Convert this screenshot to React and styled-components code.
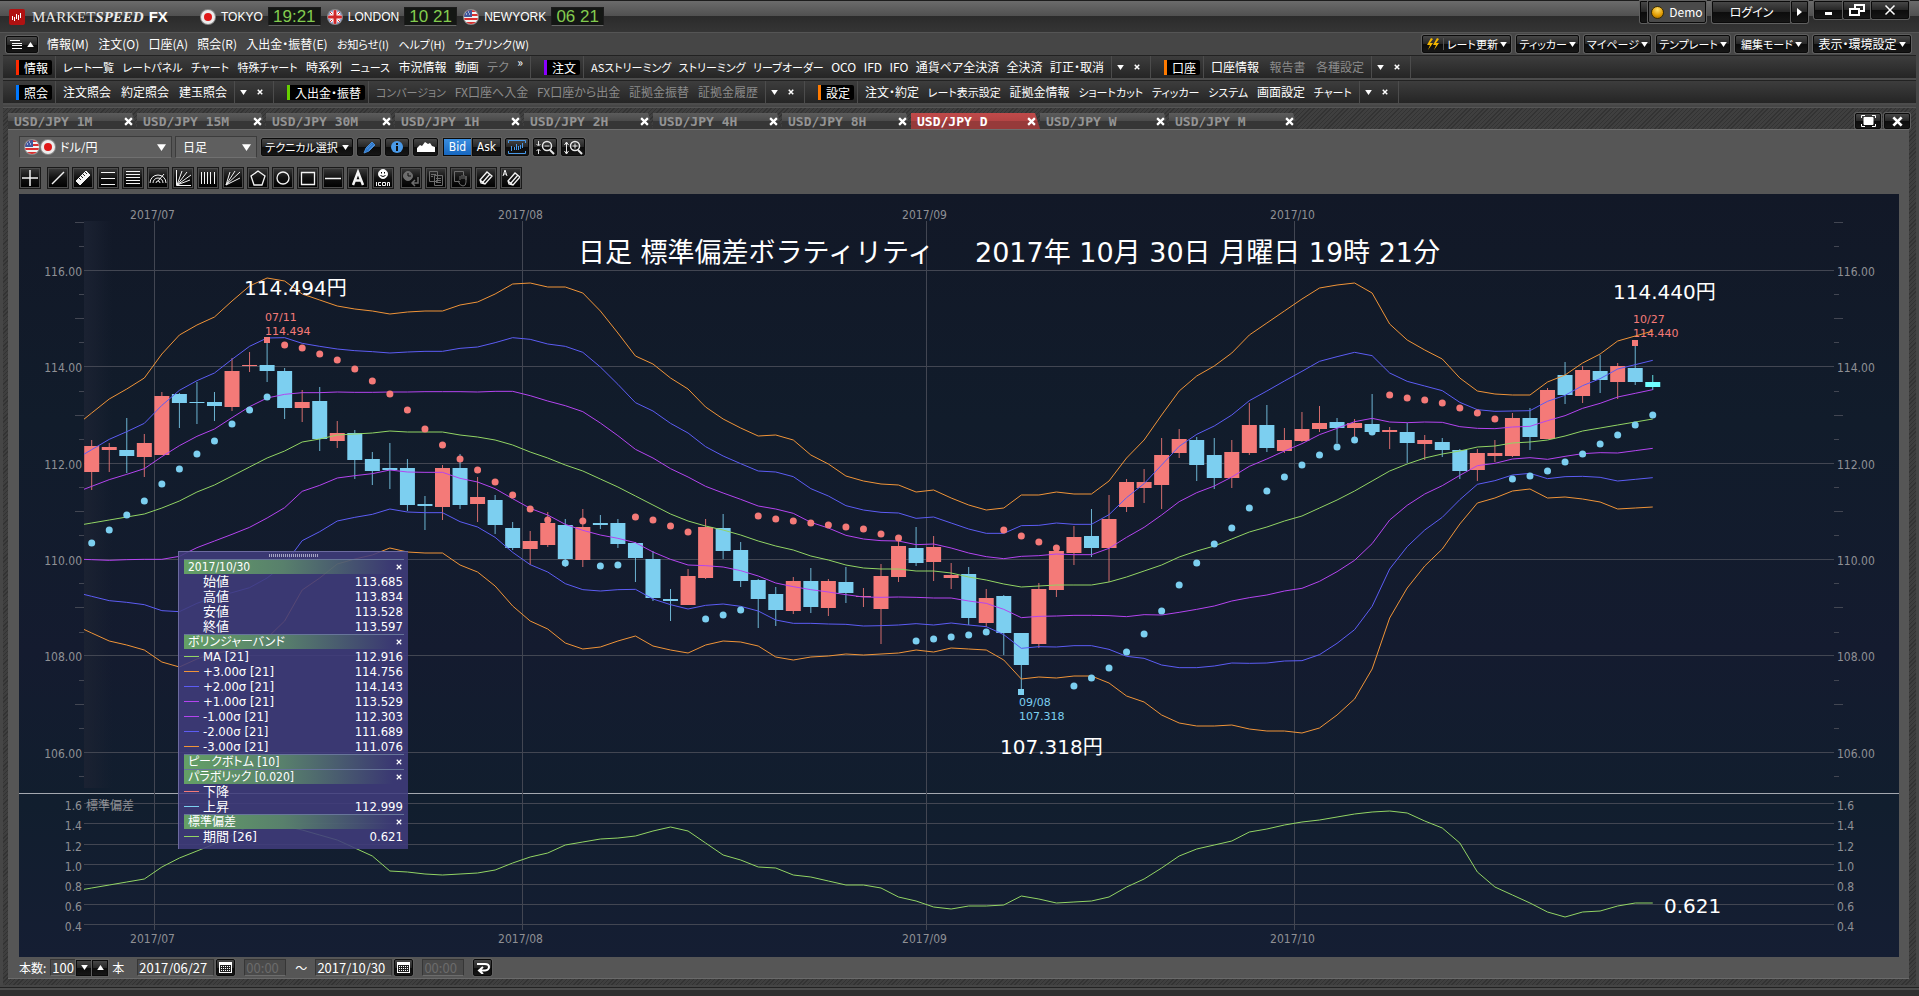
import React from 'react';
import styled, { createGlobalStyle, css } from 'styled-components';

const GlobalStyle = createGlobalStyle`
  * {
    box-sizing: border-box;
  }

  body {
    margin: 0;
    background: #2b2b2b;
    color: #fff;
    font-family: 'Noto Sans CJK JP', 'Liberation Sans', sans-serif;
    font-size: 12px;
    line-height: 1;
    font-feature-settings: 'palt';
  }

  button, select, input {
    margin: 0;
    padding: 0;
    border: 0;
    background: none;
    color: inherit;
    font: inherit;
    font-feature-settings: inherit;
  }

  svg {
    display: block;
    flex: none;
  }
`;

const hatch = css`
  background: repeating-linear-gradient(135deg, #333 0 1px, #3f3f3f 1px 3px);
`;

const darkButton = css`
  display: flex;
  align-items: center;
  justify-content: center;
  white-space: nowrap;
  color: #fff;
  background: linear-gradient(#474747, #262626 50%, #0c0c0c 51%, #161616);
  border: 1px solid #0a0a0a;
  border-radius: 2px;
  box-shadow: 0 0 0 1px #5f5f5f;
`;

const Window = styled.div`
  display: flex;
  flex-direction: column;
  min-height: 100vh;
  padding: 0 3px;
  background: #464646;
  border-top: 1px solid #1c1c1c;
`;

/* ---------- title bar ---------- */

const TitleBar = styled.header`
  display: flex;
  align-items: center;
  height: 32px;
  margin: 0 -3px;
  padding-left: 9px;
  background: linear-gradient(#6b6b6b, #505050 15px, #2b2b2b 15px, #353535);
  border-bottom: 1px solid #555;
`;

const Brand = styled.h1`
  margin: 0 0 0 7px;
  width: 168px;
  font: 15px 'Liberation Serif', serif;
  color: #ececec;
  white-space: nowrap;

  em {
    font-weight: bold;
  }

  strong {
    margin-left: 5px;
    font-family: 'Liberation Sans', sans-serif;
    color: #fff;
  }
`;

const City = styled.div`
  display: flex;
  align-items: center;
  gap: 5px;
  margin-right: 6px;
  font: 12px 'Liberation Sans', sans-serif;
`;

const Clock = styled.time`
  width: 53px;
  height: 19px;
  background: #141714;
  border: 1px solid #1c1c1c;
  border-bottom-color: #666;
  color: #83cc4f;
  font: 17px/17px 'Liberation Sans', sans-serif;
  text-align: center;
`;

const TitleActions = styled.div`
  display: flex;
  align-self: flex-start;
  margin-left: auto;
  padding-right: 10px;
`;

const TitleButton = styled.button`
  ${darkButton}
  width: ${({ $w }) => $w}px;
  height: ${({ $h }) => $h || 22}px;
  margin-left: ${({ $gap }) => $gap || 0}px;
  gap: 5px;
  background: ${({ $flat }) => ($flat ? '#4a4a4a' : undefined)};
  border-radius: 0 0 2px 2px;
`;

const Lamp = styled.i`
  width: 13px;
  height: 13px;
  border-radius: 50%;
  border: 1px solid #3b2c00;
  background: radial-gradient(circle at 50% 25%, #ffdf6a, #e09a00 60%, #8a5b00);
`;

/* ---------- menu row ---------- */

const MenuRow = styled.div`
  display: flex;
  align-items: center;
  height: 22px;
  padding: 0 5px 0 3px;
`;

const ListButton = styled.button`
  ${darkButton}
  width: 32px;
  height: 17px;
  gap: 4px;
`;

const MenuNav = styled.nav`
  display: flex;
  justify-content: space-between;
  width: 482px;
  margin-left: 9px;
`;

const MenuItem = styled.button`
  flex: none;
  font-size: ${({ $tight }) => ($tight ? 11 : 12)}px;
  white-space: nowrap;
`;

const MenuActions = styled.div`
  display: flex;
  gap: 5px;
  margin-left: auto;
`;

const DropButton = styled.button`
  ${darkButton}
  min-width: ${({ $w }) => $w}px;
  height: 18px;
  padding: 0 2px;
  gap: 2px;
  font-size: ${({ $tight }) => ($tight ? 11 : 12)}px;
`;

const Bolt = styled.span`
  margin-right: 1px;
  padding-right: 3px;
  border-right: 1px solid #555;
`;

/* ---------- toolbars ---------- */

const ToolbarRow = styled.div`
  display: flex;
  height: 25px;
  background: linear-gradient(#3d3d3d, #252525);
  border-top: 1px solid #222;
  border-bottom: 2px solid #4c4c4c;
`;

const Group = styled.section`
  display: flex;
  align-items: center;
  flex: 0 0 ${({ $w }) => $w}px;
  border-right: 1px solid #4c4c4c;
  padding-left: 4px;
`;

const Grip = styled.i`
  width: 6px;
  height: 16px;
  margin-right: 3px;
  background: radial-gradient(circle, #808080 30%, transparent 40%) 0 0 / 2px 2px;
`;

const GroupTitle = styled.h2`
  margin: 0 3px 0 0;
  padding: 2px 4px 0 5px;
  height: 15px;
  font-size: 12px;
  font-weight: normal;
  line-height: 11px;
  white-space: nowrap;
  background: #000;
  border-left: 3px solid ${({ $color }) => $color};
  border-radius: 0 2px 2px 0;
`;

const GroupItems = styled.div`
  display: flex;
  flex: 1;
  justify-content: space-between;
  align-items: center;
  height: 22px;
  padding: 0 7px;
  border: solid #4c4c4c;
  border-width: 0 ${({ $closable }) => ($closable ? 1 : 0)}px 0 1px;
`;

const ToolLink = styled.button`
  flex: none;
  font-size: ${({ $tight }) => ($tight ? 11 : 12)}px;
  white-space: nowrap;
  color: ${({ disabled }) => (disabled ? '#8b8b8b' : '#fff')};
`;

const MoreLink = styled(ToolLink)`
  align-self: flex-start;
`;

const GroupEnd = styled.div`
  display: flex;
  align-items: center;
  gap: 10px;
  padding: 0 10px 0 5px;
`;

/* ---------- workspace ---------- */

const Workspace = styled.main`
  ${hatch}
  display: flex;
  flex-direction: column;
  flex: 1;
  margin-top: 2px;
  padding: 0 6px 6px 5px;
  border-top: 1px solid #555;
`;

const TabStrip = styled.div`
  display: flex;
  align-items: flex-end;
  height: 21px;
`;

const Tab = styled.div`
  display: flex;
  align-items: center;
  justify-content: space-between;
  flex: 0 0 129px;
  height: 16px;
  padding: 0 4px 0 6px;
  font: bold 13px 'DejaVu Sans Mono', monospace;
  color: ${({ $active }) => ($active ? '#fff' : '#949494')};
  background: ${({ $active }) =>
    $active
      ? 'linear-gradient(#c04a4a, #b34444 50%, #963a3a 51%)'
      : 'linear-gradient(#5c5c5c, #4a4a4a 50%, #363636 51%)'};
  clip-path: polygon(0 0, 124px 0, 129px 100%, 0 100%);

  button:first-child {
    white-space: nowrap;
  }
`;

const StripButton = styled.button`
  ${darkButton}
  width: 26px;
  height: 16px;
  margin-left: ${({ $first }) => ($first ? 'auto' : '3px')};
`;

const Panel = styled.section`
  display: flex;
  flex-direction: column;
  flex: 1;
  padding: 6px 10px 0 11px;
  margin-right: 1px;
  background: #565656;
  border-top: 1px solid #6e6e6e;
  border-bottom: 1px solid #6a6a6a;
`;

const ControlRow = styled.div`
  display: flex;
  align-items: center;
  height: 22px;
  gap: 3px;
`;

const SelectBox = styled.label`
  display: flex;
  align-items: center;
  width: ${({ $w }) => $w}px;
  height: 22px;
  padding: 0 5px 0 ${({ $indent }) => $indent}px;
  background: #5f5f5f;
  border: 1px solid #3c3c3c;
  border-bottom-color: #707070;

  select {
    flex: 1;
    min-width: 0;
    appearance: none;
    margin-left: 4px;
  }
`;

const ControlButton = styled.button`
  ${darkButton}
  width: ${({ $w }) => $w || 24}px;
  height: 18px;
  gap: 4px;
  margin-left: 1px;
  font-size: ${({ $tight }) => ($tight ? 11 : 12)}px;
`;

const BidAsk = styled.div`
  display: flex;
  margin: 0 0 0 2px;
`;

const SideButton = styled.button`
  ${darkButton}
  width: 29px;
  height: 18px;
  border-radius: 0;
  font: 12px 'DejaVu Sans Condensed', 'Noto Sans', sans-serif;
  ${({ $on }) => $on && css`background: linear-gradient(#3a8ee0, #1767c0);`}
`;

const DrawRow = styled(ControlRow)`
  margin: 9px 0 5px;
`;

const DrawButton = styled.button`
  display: grid;
  place-items: center;
  width: 22px;
  height: 22px;
  margin-right: ${({ $gap }) => ($gap ? 3 : 0)}px;
  color: ${({ disabled }) => (disabled ? '#6d6d6d' : '#f4f4f4')};
  background: linear-gradient(#3c3c3c, #111 50%, #000);
  border: 1px solid #1a1a1a;
  outline: 1px solid #4c4c4c;
  outline-offset: -2px;
`;

const ChartArea = styled.div`
  position: relative;
  flex: 1;
  min-height: 0;
  background: linear-gradient(#121827, #111c2b 30%, #141b2f 60%, #111e2e 80%, #151e33);

  > svg {
    width: 100%;
    height: 100%;
    font-family: 'DejaVu Sans', 'Noto Sans CJK JP', sans-serif;
    font-feature-settings: normal;
  }

  .axis {
    font-family: 'DejaVu Sans Condensed', 'Noto Sans', 'Noto Sans CJK JP', sans-serif;
    font-size: 12px;
    fill: #8f9095;
  }

  .peak {
    font-size: 11px;
  }

  .note {
    font-size: 20px;
    fill: #fff;
  }

  .title {
    font-size: 27px;
    fill: #fff;
  }
`;

/* ---------- floating legend ---------- */

const Legend = styled.aside`
  position: absolute;
  left: 159px;
  top: 357px;
  width: 230px;
  padding: 0 4px 5px 5px;
  background: rgba(64, 60, 124, 0.88);
  border: solid #6c6aa0;
  border-width: 1px 0 0 1px;
  font-family: 'DejaVu Sans Condensed', 'Noto Sans', 'Noto Sans CJK JP', sans-serif;
`;

const LegendGrip = styled.div`
  width: 50px;
  height: 3px;
  margin: 2px auto;
  background: repeating-linear-gradient(90deg, #a5a4c4 0 1px, transparent 1px 2px);
`;

const LegendHead = styled.h3`
  display: flex;
  justify-content: space-between;
  align-items: center;
  height: 15px;
  margin: 0;
  padding: 0 2px 0 4px;
  font-size: 12px;
  font-weight: normal;
  line-height: 14px;
  background: linear-gradient(90deg, #64a066, #58806c 45%, transparent 95%);
  border-top: 1px solid #67759a;
`;

const LegendRow = styled.div`
  display: grid;
  grid-template-columns: 15px 1fr auto;
  align-items: center;
  column-gap: 4px;
  height: 15px;
  padding-right: 1px;
  font-size: 13px;
  line-height: 15px;

  i {
    height: 1px;
    background: ${({ $color }) => $color || 'transparent'};
  }
`;

/* ---------- footer ---------- */

const Footer = styled.footer`
  display: flex;
  align-items: center;
  height: 21px;

  > label {
    margin-right: 4px;
  }
`;

const Field = styled.input`
  width: ${({ $w }) => $w}px;
  height: 17px;
  padding: 0 1px;
  background: #4a4a4a;
  border: 1px solid #363636;
  border-bottom-color: #6c6c6c;
  font-size: 13px;
  font-feature-settings: normal;
  color: ${({ disabled }) => (disabled ? '#6b6b6b' : '#fff')};
`;

const StepButton = styled.button`
  ${darkButton}
  width: 16px;
  height: 16px;
  border-radius: 0;
`;

const FooterButton = styled.button`
  ${darkButton}
  width: ${({ $w }) => $w || 19}px;
  height: ${({ $h }) => $h || 17}px;
  margin: 0 ${({ $after }) => $after || 0}px 0 2px;
`;

const Unit = styled.span`
  margin: 0 13px 0 4px;
`;

const Tilde = styled.span`
  margin: 0 8px 0 9px;
`;

const StatusBar = styled.div`
  height: 11px;
  margin: 0 -3px;
  background: linear-gradient(#454545 0 2px, #222 2px 3px, #4c4c4c 3px 5px, #303030 5px);
`;

/* ---------- small drawings ---------- */

const Caret = ({ up, size = 7 }) => (
  <svg width={size} height={size - 2} viewBox="0 0 8 6" aria-hidden="true">
    <path d={up ? 'M0 6h8L4 0z' : 'M0 0h8L4 6z'} fill="#fff" />
  </svg>
);

const Cross = ({ size = 7, weight = 2 }) => (
  <svg width={size} height={size} viewBox="0 0 8 8" aria-hidden="true">
    <path d="M1 1l6 6M7 1L1 7" stroke="#fff" strokeWidth={weight} />
  </svg>
);

const Flag = ({ country }) => (
  <svg width="16" height="16" viewBox="0 0 16 16" aria-hidden="true">
    <clipPath id={`round-${country}`}>
      <circle cx="8" cy="8" r="7" />
    </clipPath>
    <circle cx="8" cy="8" r="8" fill="#8a8a8a" />
    <g clipPath={`url(#round-${country})`}>
      {country === 'jp' && (
        <>
          <path d="M0 0h16v16H0z" fill="#ececec" />
          <circle cx="8" cy="8" r="4" fill="#e01818" />
        </>
      )}
      {country === 'uk' && (
        <>
          <path d="M0 0h16v16H0z" fill="#2c4a9c" />
          <path d="M1 1l14 14M15 1L1 15" stroke="#fff" strokeWidth="3" />
          <path d="M1 1l14 14M15 1L1 15" stroke="#d02828" />
          <path d="M8 0v16M0 8h16" stroke="#fff" strokeWidth="5" />
          <path d="M8 0v16M0 8h16" stroke="#d02828" strokeWidth="3" />
        </>
      )}
      {country === 'us' && (
        <>
          <path d="M0 0h16v16H0z" fill="#f2f2f2" />
          <path d="M0 2h16M0 6h16M0 10h16M0 14h16" stroke="#d83030" strokeWidth="2" />
          <path d="M0 0h9v8H0z" fill="#41589c" />
          <path d="M2 3h1M5 3h1M3 5h1M6 5h1" stroke="#fff" />
        </>
      )}
    </g>
  </svg>
);

const Logo = () => (
  <svg width="16" height="16" viewBox="0 0 16 16" aria-hidden="true">
    <rect width="16" height="16" rx="2" fill="#b01212" />
    <path d="M3.500 7v4M5.500 8v4M7.500 5v5M9.500 6v5M11.500 4v5" stroke="#fff" />
  </svg>
);

const Icon = ({ children, fill = 'none', size = 18 }) => (
  <svg width={size} height={size} viewBox="0 0 18 18" fill={fill} stroke="currentColor" aria-hidden="true">
    {children}
  </svg>
);

const eraser = <path d="M3 11L10 3l5 4-7 8-4-1zM3 11l5 4M6 13l7-8" strokeWidth="1.3" />;

const DRAW_TOOLS = [
  ['十字カーソル', <path d="M9 1v16M1 9h16" strokeWidth="1.5" />],
  ['直線', <path d="M3 15L15 3" strokeWidth="1.5" />],
  ['定規', <><path d="M2 12L12 2l4 4L6 16z" fill="currentColor" /><path d="M5 9l2 2M7 7l2 2M9 5l2 2M11 3l2 2" stroke="#222" /></>],
  ['三本線', <path d="M2 3.5h14M2 9.5h14M2 15.5h14" />],
  ['五本線', <path d="M2 2.5h14M2 5.5h14M2 8.5h14M2 11.5h14M2 14.5h14" />],
  ['円弧', <path d="M1 14a8 8 0 0 1 16 0M4 14a5 5 0 0 1 10 0M7 14a2 2 0 0 1 4 0M9 12l6-7" />],
  ['ファン', <path d="M2.500 1v15.500H17M3 16L8 2M3 16L13 3M3 16L17 6M3 16l13-5" />],
  ['タイムゾーン', <path d="M2.500 3v12M5.500 3v12M8.500 3v12M11.500 3v12M15.500 3v12" />],
  ['放射線', <path d="M2 16L6 3M2 16L11 2M2 16L16 3M2 16l14-7" />],
  ['五角形', <path d="M9 2l7 5-3 9H5L2 7z" strokeWidth="1.3" />],
  ['円', <circle cx="9" cy="9" r="6" strokeWidth="1.3" />],
  ['四角形', <path d="M2.500 3.500h13v12h-13z" strokeWidth="1.3" />],
  ['水平線', <path d="M1 9.500h16" strokeWidth="1.500" />],
  ['テキスト', <path d="M4 16L9 3l5 13M6 11.500h6" strokeWidth="2.500" />],
  [
    'アイコン',
    <>
      <circle cx="9" cy="5" r="4.500" fill="#fff" />
      <path d="M7.500 3v1.500M10.500 3v1.500M6.500 6.500q2.500 2 5 0" stroke="#000" />
      <path d="M2.500 13v4M7 13.500H4.500v3H7M8.500 13.500h3v3h-3zM13.500 17v-3.500h2V17" />
    </>,
  ],
  ['履歴', <><circle cx="6" cy="7" r="4.500" fill="currentColor" /><path d="M6 4v3h3" stroke="#111" /><path d="M16 8v6h-5M13 11l-3 3 3 3" strokeWidth="1.500" /></>],
  ['コピー', <path d="M2.500 2.500h8v10h-8zM7.500 6.500h8v10h-8zM9 9.500h5M9 11.500h5M9 13.500h5M4 5.500h5M4 7.500h2" />],
  ['移動', <path d="M2.500 2.500h9v4M2.500 2.500v10h4M8 11V7M10 10V6M12 10V6M14 11V7v6q0 4-3 4t-5-5l2 1" />],
  ['消しゴム', eraser],
  ['全消去', <><g transform="translate(3 1)">{eraser}</g><path d="M1 7l2-6 2 6M2 5h2" /></>],
];

/* ---------- chart data: canvas heights by trading day ---------- */

const STEP = 17.54;
const xAt = i => 91.7 + STEP * i;

// high, body top, body bottom, low, rising
const CANDLES = [
  [440, 446, 472, 490, 1], [443, 447, 450, 472, 1], [418, 450, 456, 473, 0], [434, 443, 457, 477, 1],
  [392, 396, 455, 455, 1], [393, 394, 403, 428, 0], [382, 402, 403, 424, 0], [392, 402, 406, 421, 0],
  [358, 371, 407, 411, 1], [352, 365, 366, 372, 1], [340, 365, 371, 382, 0], [368, 371, 408, 419, 0],
  [390, 402, 408, 422, 1], [387, 401, 439, 451, 0], [421, 433, 441, 448, 1], [430, 433, 460, 479, 0],
  [452, 459, 471, 485, 0], [443, 468, 470, 489, 0], [459, 468, 505, 511, 0], [496, 504, 506, 530, 0],
  [465, 468, 507, 520, 1], [454, 468, 505, 509, 0], [477, 497, 504, 522, 1], [495, 500, 525, 534, 0],
  [522, 528, 548, 550, 0], [531, 541, 549, 565, 1], [512, 523, 545, 547, 1], [519, 525, 559, 567, 0],
  [509, 527, 560, 567, 1], [515, 523, 525, 529, 0], [519, 523, 544, 548, 0], [542, 543, 558, 582, 0],
  [551, 559, 598, 601, 0], [589, 599, 601, 621, 0], [569, 576, 605, 605, 1], [519, 527, 578, 579, 1],
  [514, 528, 551, 559, 0], [542, 550, 581, 587, 0], [579, 580, 599, 628, 0], [587, 594, 610, 626, 0],
  [577, 581, 611, 614, 1], [568, 581, 607, 613, 0], [579, 581, 608, 616, 1], [567, 582, 593, 603, 0],
  [588, 596, 597, 607, 1], [564, 576, 609, 644, 1], [541, 546, 577, 582, 1], [527, 548, 563, 566, 0],
  [536, 547, 562, 581, 1], [563, 575, 578, 589, 1], [567, 574, 618, 625, 0], [589, 598, 623, 627, 1],
  [595, 596, 633, 655, 0], [633, 633, 665, 690, 0], [583, 589, 644, 648, 1], [547, 551, 590, 597, 1],
  [526, 537, 553, 565, 1], [509, 536, 548, 557, 0], [495, 519, 548, 582, 1], [479, 482, 507, 512, 1],
  [469, 482, 488, 503, 1], [438, 455, 485, 509, 1], [429, 439, 453, 458, 1], [437, 440, 465, 481, 0],
  [438, 455, 478, 489, 0], [440, 452, 478, 488, 1], [403, 425, 453, 455, 1], [405, 425, 448, 452, 0],
  [428, 440, 451, 453, 1], [412, 429, 441, 442, 1], [406, 423, 429, 432, 1], [418, 422, 428, 443, 0],
  [419, 423, 428, 437, 1], [394, 424, 432, 433, 0], [427, 430, 432, 449, 1], [423, 432, 443, 463, 0],
  [435, 440, 444, 460, 1], [438, 442, 450, 457, 0], [449, 450, 471, 479, 0], [449, 453, 470, 481, 1],
  [440, 453, 456, 462, 1], [413, 418, 456, 457, 1], [408, 418, 437, 450, 0], [388, 390, 439, 439, 1],
  [362, 375, 395, 404, 0], [366, 370, 396, 403, 1], [355, 371, 380, 393, 0], [363, 366, 382, 399, 1],
  [346, 368, 382, 385, 0], [375, 382, 387, 390, 2],
];

// Parabolic SAR, split into runs of one trend
const SAR = [
  { start: 0, up: true, ys: [543, 530, 515, 501, 484, 469, 454, 441, 424, 410, 397] },
  { start: 11, ys: [345, 348, 354, 360, 369, 381, 394, 410, 429, 445, 459, 470, 482, 495, 509, 520] },
  { start: 27, up: true, ys: [563] },
  { start: 28, ys: [521] },
  { start: 29, up: true, ys: [566, 565] },
  { start: 31, ys: [517, 520, 526, 532] },
  { start: 35, up: true, ys: [619, 615, 610] },
  { start: 38, ys: [516, 519, 521, 523, 525, 527, 529, 534, 538] },
  { start: 47, up: true, ys: [641, 639, 637, 635, 632] },
  { start: 52, ys: [530, 536, 542, 548] },
  {
    start: 56,
    up: true,
    ys: [686, 678, 668, 652, 634, 611, 585, 563, 544, 528, 508, 491, 477, 465, 455, 447, 440, 432],
  },
  { start: 74, ys: [395, 398, 400, 403, 408, 413, 419] },
  { start: 81, up: true, ys: [479, 476, 471, 462, 454, 444, 435, 425, 415] },
];

const MA = [
  523, 520, 517, 514, 508, 501, 492, 485, 476, 467, 458, 451, 442, 439, 435, 434, 433, 431, 432, 432,
  432, 435, 437, 440, 445, 452, 458, 465, 471, 479, 487, 496, 505, 514, 521, 526, 530, 535, 541, 546,
  550, 556, 560, 565, 568, 569, 569, 571, 571, 573, 577, 580, 584, 587, 586, 585, 585, 585, 582, 577,
  571, 565, 557, 551, 546, 539, 532, 527, 521, 516, 508, 500, 491, 481, 471, 464, 458, 454, 451, 447,
  446, 443, 442, 440, 436, 431, 428, 425, 422, 419,
];

const UPPER = [
  413, 399, 389, 378, 354, 335, 325, 317, 301, 286, 278, 281, 294, 300, 306, 309, 311, 314, 312, 311,
  311, 305, 302, 294, 284, 283, 287, 287, 293, 311, 333, 356, 364, 378, 389, 407, 419, 428, 436, 435,
  440, 455, 464, 476, 481, 484, 485, 492, 490, 498, 505, 510, 508, 495, 495, 492, 494, 494, 481, 458,
  440, 415, 391, 376, 366, 353, 335, 323, 311, 299, 288, 285, 283, 293, 324, 340, 350, 359, 378, 391,
  394, 395, 395, 382, 375, 363, 354, 341, 336, 331,
];

const DEVIATION = [
  888, 885, 882, 879, 867, 858, 851, 844, 835, 826, 821, 826, 830, 835, 840, 848, 856, 871, 872, 874,
  875, 874, 873, 870, 863, 857, 853, 845, 842, 839, 838, 836, 831, 827, 831, 843, 855, 860, 867, 868,
  875, 877, 881, 885, 885, 888, 897, 901, 907, 909, 906, 906, 905, 896, 899, 903, 902, 901, 897, 887,
  879, 868, 856, 849, 845, 841, 832, 829, 825, 822, 820, 817, 814, 812, 811, 813, 821, 828, 843, 872,
  887, 895, 903, 912, 917, 912, 911, 906, 903, 903,
];

const COLORS = {
  up: '#f47a78',
  down: '#7ccff0',
  live: '#6fffff',
  ma: '#92d464',
  s1: '#b444f0',
  s2: '#5c5cf4',
  s3: '#f09438',
};

const BANDS = [
  [3, COLORS.s3],
  [2, COLORS.s2],
  [1, COLORS.s1],
  [0, COLORS.ma],
  [-1, COLORS.s1],
  [-2, COLORS.s2],
  [-3, COLORS.s3],
];

// extends the first segment to the left edge of the plot
const toPoints = ys => {
  const first = ys[0] - (ys[1] - ys[0]) * 0.44;
  return [`84,${first}`, ...ys.map((y, i) => `${xAt(i)},${y}`)].join(' ');
};

const bandPoints = k => toPoints(MA.map((ma, i) => ma - ((ma - UPPER[i]) / 3) * k));

const MONTHS = [
  ['2017/07', 154.5],
  ['2017/08', 522.5],
  ['2017/09', 926.5],
  ['2017/10', 1294.5],
];

const PRICES = [
  [116, 270.5],
  [114, 366.5],
  [112, 463.5],
  [110, 559.5],
  [108, 655.5],
  [106, 752.5],
];

const LEVELS = [
  ['1.6', 803.5],
  ['1.4', 823.5],
  ['1.2', 844.5],
  ['1.0', 864.5],
  ['0.8', 884.5],
  ['0.6', 904.5],
  ['0.4', 924.5],
];

const TICKS = Array.from({ length: 24 }, (_, i) => 117 - i / 2).filter(p => p % 2 !== 0);

const Chart = () => (
  <svg viewBox="19 194 1880 763" role="img" aria-label="USD/JPY 日足チャート">
    <defs>
      <linearGradient id="edge">
        <stop offset="0" stopColor="#1b2232" />
        <stop offset="1" stopColor="#1b2232" stopOpacity="0" />
      </linearGradient>
    </defs>
    <rect x="84" y="221" width="28" height="567" fill="url(#edge)" />

    <g stroke="#424652" shapeRendering="crispEdges">
      {PRICES.map(([price, y]) => (
        <path key={price} d={`M84 ${y}H1834`} />
      ))}
      {LEVELS.map(([level, y]) => (
        <path key={level} d={`M84 ${y}H1834`} />
      ))}
      {TICKS.map(p => {
        const y = Math.round(270 + (116 - p) * 48.2) + 0.5;
        const len = p % 1 === 0 ? 9 : 5;
        return <path key={p} d={`M84 ${y}h${-len}M1834 ${y}h${len}`} />;
      })}
      <path d="M19 793.5H1899" stroke="#a4a8b0" />
      {MONTHS.map(([month, x]) => (
        <path key={month} d={`M${x} 221V930`} />
      ))}
    </g>

    {MONTHS.map(([month, x]) => (
      <g key={month} className="axis" textAnchor="middle">
        <text x={x - 2} y="219">{month}</text>
        <text x={x - 2} y="943">{month}</text>
      </g>
    ))}
    {PRICES.map(([price, y]) => (
      <g key={price} className="axis">
        <text x="82" y={y + 5} textAnchor="end">{price.toFixed(2)}</text>
        <text x="1837" y={y + 5}>{price.toFixed(2)}</text>
      </g>
    ))}
    {LEVELS.map(([level, y]) => (
      <g key={level} className="axis">
        <text x="82" y={y + 6} textAnchor="end">{level}</text>
        <text x="1837" y={y + 6}>{level}</text>
      </g>
    ))}
    <text x="86" y="810" className="axis">標準偏差</text>

    <g className="peak" fill={COLORS.up}>
      <text x="265" y="321">07/11</text>
      <text x="265" y="335">114.494</text>
      <text x="1633" y="323">10/27</text>
      <text x="1633" y="337">114.440</text>
    </g>
    <g className="peak" fill={COLORS.down}>
      <text x="1019" y="706">09/08</text>
      <text x="1019" y="720">107.318</text>
    </g>

    <clipPath id="plot">
      <path d="M84 221h1750v709H84z" />
    </clipPath>
    <g clipPath="url(#plot)">
      {CANDLES.map(([high, top, bottom, low, dir], i) => {
        const color = [COLORS.down, COLORS.up, COLORS.live][dir];
        return (
          <g key={i} fill={color}>
            <path d={`M${xAt(i)} ${high}V${low}`} stroke={color} strokeOpacity="0.85" />
            <rect x={xAt(i) - 7.5} y={top} width="15" height={Math.max(bottom - top, 1)} />
          </g>
        );
      })}
      <g fill="none">
        {BANDS.map(([k, color]) => (
          <polyline key={k} points={bandPoints(k)} stroke={color} />
        ))}
        <polyline points={toPoints(DEVIATION)} stroke={COLORS.ma} />
      </g>
      {SAR.map(({ start, up, ys }) =>
        ys.map((y, i) => (
          <circle key={start + i} cx={xAt(start + i)} cy={y} r="3.5" fill={up ? COLORS.down : COLORS.up} />
        ))
      )}
      <rect x="264" y="337" width="6" height="6" fill={COLORS.up} />
      <rect x="1632" y="340" width="6" height="6" fill={COLORS.up} />
      <rect x="1018" y="689" width="6" height="6" fill={COLORS.down} />
    </g>

    <text x="578" y="262" className="title">日足 標準偏差ボラティリティ</text>
    <text x="975" y="262" className="title">2017年 10月 30日 月曜日 19時 21分</text>
    <text x="244" y="295" className="note">114.494円</text>
    <text x="1613" y="299" className="note">114.440円</text>
    <text x="1000" y="754" className="note">107.318円</text>
    <text x="1664" y="913" className="note">0.621</text>
  </svg>
);

const LEGEND = [
  {
    title: '2017/10/30',
    rows: [['始値', '113.685'], ['高値', '113.834'], ['安値', '113.528'], ['終値', '113.597']],
  },
  {
    title: 'ボリンジャーバンド',
    rows: [
      ['MA [21]', '112.916', COLORS.ma],
      ['+3.00σ [21]', '114.756', COLORS.s3],
      ['+2.00σ [21]', '114.143', COLORS.s2],
      ['+1.00σ [21]', '113.529', COLORS.s1],
      ['-1.00σ [21]', '112.303', COLORS.s1],
      ['-2.00σ [21]', '111.689', COLORS.s2],
      ['-3.00σ [21]', '111.076', COLORS.s3],
    ],
  },
  { title: 'ピークボトム [10]', rows: [] },
  {
    title: 'パラボリック [0.020]',
    rows: [['下降', '', COLORS.up], ['上昇', '112.999', COLORS.down]],
  },
  { title: '標準偏差', rows: [['期間 [26]', '0.621', COLORS.ma]] },
];

const CITIES = [
  ['TOKYO', 'jp', '19:21'],
  ['LONDON', 'uk', '10 21'],
  ['NEWYORK', 'us', '06 21'],
];

const MENU = ['情報(M)', '注文(O)', '口座(A)', '照会(R)', '入出金・振替(E)', 'お知らせ(I)', 'ヘルプ(H)', 'ウェブリンク(W)'];

const ACTIONS = [
  ['レート更新', 89],
  ['ティッカー', 62],
  ['マイページ', 67],
  ['テンプレート', 74],
  ['編集モード', 73],
  ['表示・環境設定', 98],
];

// disabled entries start with "-"
const TOOLBARS = [
  [
    { title: '情報', color: '#ff2a00', w: 528, items: ['レート一覧', 'レートパネル', 'チャート', '特殊チャート', '時系列', 'ニュース', '市況情報', '動画', '-テク'] },
    {
      title: '注文', color: '#8a00ff', w: 620, closable: true,
      items: ['ASストリーミング', 'ストリーミング', 'リーブオーダー', 'OCO', 'IFD', 'IFO', '通貨ペア全決済', '全決済', '訂正・取消'],
    },
    { title: '口座', color: '#ff7a00', w: 260, closable: true, items: ['口座情報', '-報告書', '-各種設定'] },
  ],
  [
    { title: '照会', color: '#0078ff', w: 271, closable: true, items: ['注文照会', '約定照会', '建玉照会'] },
    {
      title: '入出金・振替', color: '#66d000', w: 531, closable: true,
      items: ['-コンバージョン', '-FX口座へ入金', '-FX口座から出金', '-証拠金振替', '-証拠金履歴'],
    },
    {
      title: '設定', color: '#ff7a00', w: 594, closable: true,
      items: ['注文・約定', 'レート表示設定', '証拠金情報', 'ショートカット', 'ティッカー', 'システム', '画面設定', 'チャート'],
    },
  ],
];

const TABS = ['1M', '15M', '30M', '1H', '2H', '4H', '8H', 'D', 'W', 'M'];

const isKanaHeavy = text => (text.match(/[ぁ-んァ-ヶー]/g) || []).length > 2;

const ToolGroup = ({ title, color, w, items, closable }) => (
  <Group $w={w} aria-label={title}>
    <Grip />
    <GroupTitle $color={color}>{title}</GroupTitle>
    <GroupItems $closable={closable}>
      {items.map(item => {
        const label = item.replace('-', '');
        return (
          <ToolLink key={item} disabled={item !== label} $tight={isKanaHeavy(label)}>
            {label}
          </ToolLink>
        );
      })}
      {!closable && <MoreLink aria-label="さらに表示">»</MoreLink>}
    </GroupItems>
    {closable && (
      <GroupEnd>
        <button aria-label={`${title}メニュー`}><Caret /></button>
        <button aria-label={`${title}を閉じる`}><Cross size={6} /></button>
      </GroupEnd>
    )}
  </Group>
);

const CalendarIcon = () => (
  <svg width="13" height="11" viewBox="0 0 13 11" shapeRendering="crispEdges" aria-hidden="true">
    <path d="M0 0h13v11H0z" fill="#fff" />
    <path d="M1 3h11v7H1z" fill="#222" />
    <path d="M2 4.500h9M2 6.500h9M2 8.500h9" stroke="#fff" strokeDasharray="1 1" />
  </svg>
);

const App = () => (
  <>
    <GlobalStyle />
    <Window>
      <TitleBar>
        <Logo />
        <Brand>
          MARKET<em>SPEED</em><strong>FX</strong>
        </Brand>
        {CITIES.map(([name, country, time]) => (
          <City key={name}>
            <Flag country={country} />
            {name}
            <Clock>{time}</Clock>
          </City>
        ))}
        <TitleActions>
          <TitleButton $w={8} aria-label="折りたたむ" />
          <TitleButton $w={58} $flat><Lamp />Demo</TitleButton>
          <TitleButton $w={79} $gap={6}>ログイン</TitleButton>
          <TitleButton $w={17} aria-label="ログインメニュー">
            <svg width="5" height="8" viewBox="0 0 5 8"><path d="M0 0v8l5-4z" fill="#fff" /></svg>
          </TitleButton>
          <TitleButton $w={29} $h={18} $gap={6} aria-label="最小化">
            <svg width="8" height="10"><path d="M0 8.500h7" stroke="#fff" strokeWidth="3" /></svg>
          </TitleButton>
          <TitleButton $w={28} $h={18} aria-label="元に戻す">
            <svg width="16" height="12" fill="none" stroke="#fff" strokeWidth="2">
              <path d="M6 4V1h9v6h-4M1 5h9v6H1z" />
            </svg>
          </TitleButton>
          <TitleButton $w={38} $h={18} aria-label="閉じる"><Cross size={12} weight={1} /></TitleButton>
        </TitleActions>
      </TitleBar>

      <MenuRow>
        <ListButton aria-label="メニュー一覧">
          <svg width="13" height="10"><path d="M0 1.500h10M2 4.500h10M2 6.500h10M2 9.500h10" stroke="#fff" /></svg>
          <Caret up />
        </ListButton>
        <MenuNav>
          {MENU.map(item => (
            <MenuItem key={item} $tight={isKanaHeavy(item)}>{item}</MenuItem>
          ))}
        </MenuNav>
        <MenuActions>
          {ACTIONS.map(([label, w], i) => (
            <DropButton key={label} $w={w} $tight={isKanaHeavy(label)}>
              {i === 0 && (
                <Bolt>
                  <svg width="13" height="12"><path d="M4 0L0 7h3l-2 5 5-7H3l3-4zM10 0L6 7h3l-2 5 5-7H9l3-4z" fill="#f5b800" /></svg>
                </Bolt>
              )}
              {label}
              <Caret />
            </DropButton>
          ))}
        </MenuActions>
      </MenuRow>

      {TOOLBARS.map((groups, i) => (
        <ToolbarRow key={i}>
          {groups.map(group => (
            <ToolGroup key={group.title} {...group} />
          ))}
        </ToolbarRow>
      ))}

      <Workspace>
        <TabStrip>
          {TABS.map(name => (
            <Tab key={name} $active={name === 'D'}>
              <button>USD/JPY {name}</button>
              <button aria-label={`${name}を閉じる`}><Cross size={9} /></button>
            </Tab>
          ))}
          <StripButton $first aria-label="最大化">
            <svg width="15" height="12" fill="none" stroke="#fff">
              <path d="M.5 3V.5H4M11 .5h3.500V3M14.500 9v2.500H11M4 11.500H.5V9" />
              <path d="M3 2.500h9v7H3z" fill="#fff" />
            </svg>
          </StripButton>
          <StripButton aria-label="チャートを閉じる"><Cross size={11} /></StripButton>
        </TabStrip>

        <Panel>
          <ControlRow>
            <SelectBox $w={153} $indent={4}>
              <Flag country="us" />
              <Flag country="jp" />
              <select aria-label="通貨ペア"><option>ドル/円</option></select>
              <Caret size={9} />
            </SelectBox>
            <SelectBox $w={82} $indent={3}>
              <select aria-label="足種"><option>日足</option></select>
              <Caret size={9} />
            </SelectBox>
            <ControlButton $w={92} $tight>テクニカル選択<Caret /></ControlButton>
            <ControlButton $w={24} aria-label="描画">
              <svg width="13" height="13"><path d="M1 12l2-5 6-6 3 3-6 6zM4 8l5-5M6 9l5-5" fill="#2d78cc" stroke="#4a8ed8" /></svg>
            </ControlButton>
            <ControlButton $w={24} aria-label="情報">
              <svg width="12" height="12">
                <circle cx="6" cy="6" r="6" fill="#4a9ae8" />
                <path d="M6 2v2M6 5v5" stroke="#111" strokeWidth="2" />
              </svg>
            </ControlButton>
            <ControlButton $w={25} aria-label="エリア">
              <svg width="18" height="10"><path d="M0 10V6l3-3 2 1 3-4 3 2 2-1 2 3 3 1v5z" fill="#fff" /></svg>
            </ControlButton>
            <BidAsk>
              <SideButton $on>Bid</SideButton>
              <SideButton>Ask</SideButton>
            </BidAsk>
            <ControlButton $w={24} aria-label="チャート種類">
              <svg width="18" height="14" fill="none" stroke="#4a9ae8">
                <path d="M.5 3V.5h17V3M.5 11v2.500h17V11M3.500 6v5M6.500 7v3M8.500 4v6M10.500 6v4M12.500 5v4M14.500 3v5" />
              </svg>
            </ControlButton>
            {['縮小', '拡大'].map((label, i) => (
              <ControlButton key={label} $w={24} aria-label={label}>
                <svg width="20" height="15" fill="none" stroke="#e8e8e8">
                  <path d={i ? 'M3.500 2v12M1.500 5l2-3 2 3M1.500 11l2 3 2-3' : 'M3.500 1v4M3.500 10v4M1.500 4l2 2 2-2M1.500 11l2-2 2 2'} />
                  <circle cx="12" cy="6" r="4.500" strokeWidth="1.500" />
                  <path d={i ? 'M9.500 6h5M12 3.500v5' : 'M9.500 6h5'} />
                  <path d="M15 10l4 4" strokeWidth="2" />
                </svg>
              </ControlButton>
            ))}
          </ControlRow>

          <DrawRow>
            {DRAW_TOOLS.map(([label, drawing], i) => (
              <DrawButton key={label} aria-label={label} disabled={i > 14 && i < 18} $gap={i === 0 || i === 14}>
                <Icon>{drawing}</Icon>
              </DrawButton>
            ))}
          </DrawRow>

          <ChartArea>
            <Chart />
            <Legend>
              <LegendGrip />
              {LEGEND.map(({ title, rows }) => (
                <React.Fragment key={title}>
                  <LegendHead>
                    {title}
                    <button aria-label={`${title}を消す`}><Cross size={6} weight={1.5} /></button>
                  </LegendHead>
                  {rows.map(([label, value, color]) => (
                    <LegendRow key={label} $color={color}>
                      <i />
                      <span>{label}</span>
                      <span>{value}</span>
                    </LegendRow>
                  ))}
                </React.Fragment>
              ))}
            </Legend>
          </ChartArea>

          <Footer>
            <label htmlFor="bars">本数:</label>
            <Field id="bars" $w={26} defaultValue="100" />
            <StepButton aria-label="減らす"><Caret /></StepButton>
            <StepButton aria-label="増やす"><Caret up /></StepButton>
            <Unit>本</Unit>
            <Field $w={77} defaultValue="2017/06/27" aria-label="開始日" />
            <FooterButton $after={9} aria-label="開始日カレンダー"><CalendarIcon /></FooterButton>
            <Field $w={42} defaultValue="00:00" disabled aria-label="開始時刻" />
            <Tilde>～</Tilde>
            <Field $w={77} defaultValue="2017/10/30" aria-label="終了日" />
            <FooterButton $after={9} aria-label="終了日カレンダー"><CalendarIcon /></FooterButton>
            <Field $w={42} defaultValue="00:00" disabled aria-label="終了時刻" />
            <Tilde as={FooterButton} $w={24} $h={18} aria-label="更新">
              <svg width="14" height="12" fill="none" stroke="#fff" strokeWidth="2">
                <path d="M1 2h8q4 0 4 3t-4 3.500H4M7 5L3 8.500 7 12" />
              </svg>
            </Tilde>
          </Footer>
        </Panel>
      </Workspace>
      <StatusBar />
    </Window>
  </>
);

export default App;
